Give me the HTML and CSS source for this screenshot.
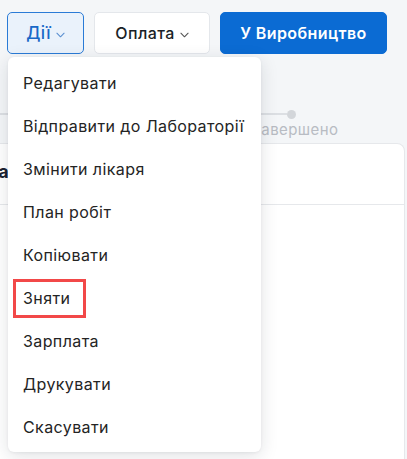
FILE: index.html
```html
<!DOCTYPE html>
<html lang="uk">
<head>
<meta charset="utf-8">
<link rel="stylesheet" href="styles.css">
</head>
<body>
<div class="page">
  <div class="toolbar">
    <button class="btn btn-actions">Дії <svg class="chev" viewBox="0 0 10 6" width="9" height="6"><path d="M1 1l4 4 4-4" fill="none" stroke="currentColor" stroke-width="1.2" stroke-linecap="round" stroke-linejoin="round"/></svg></button>
    <button class="btn btn-pay">Оплата <svg class="chev" viewBox="0 0 10 6" width="9" height="6"><path d="M1 1l4 4 4-4" fill="none" stroke="currentColor" stroke-width="1.2" stroke-linecap="round" stroke-linejoin="round"/></svg></button>
    <button class="btn btn-primary">У Виробництво</button>
  </div>

  <div class="stepper">
    <div class="seg"></div>
    <div class="step">
      <div class="step-head"><span class="dot"></span></div>
      <div class="step-label">Завершено</div>
    </div>
  </div>

  <div class="card">
    <div class="card-head">
      <div class="card-title"><span>Інформація пацієнта</span></div>
    </div>
    <div class="card-body"></div>
  </div>

  <ul class="menu">
    <li class="item">Редагувати</li>
    <li class="item">Відправити до Лабораторії</li>
    <li class="item">Змінити лікаря</li>
    <li class="item">План робіт</li>
    <li class="item">Копіювати</li>
    <li class="item marked"><span class="mark">Зняти</span></li>
    <li class="item">Зарплата</li>
    <li class="item">Друкувати</li>
    <li class="item">Скасувати</li>
  </ul>
</div>
</body>
</html>
```

FILE: styles.css
```css
* { box-sizing: border-box; }
html, body { margin: 0; padding: 0; }
body {
  background: #f4f6f8;
  font-family: Inter, "Noto Sans", "DejaVu Sans", sans-serif;
  color: #222;
  letter-spacing: 0.4px;
  width: 407px;
  height: 459px;
  overflow: hidden;
}
.page {
  position: relative;
  padding: 12px 7px 0 7px;
}
.toolbar {
  display: flex;
  gap: 10px;
}
.btn {
  height: 42px;
  border-radius: 5px;
  font-family: inherit;
  font-size: 16px;
  font-weight: 500;
  letter-spacing: 0.4px;
  display: flex;
  align-items: center;
  justify-content: center;
  gap: 5px;
  cursor: pointer;
  padding: 0;
}
.chev { margin-top: 3px; }
.btn-actions {
  width: 77px;
  background: #eaf2fb;
  border: 1px solid #2a7bd6;
  color: #1868c7;
  font-size: 17px;
}
.btn-pay {
  width: 116px;
  background: #fff;
  border: 1px solid #e4e7eb;
  color: #1b1f27;
}
.btn-pay .chev { color: #555; }
.btn-actions .chev { color: #5a8fd0; }
.btn-primary {
  width: 167px;
  background: #0b6bd3;
  border: 1px solid #0b6bd3;
  color: #fff;
  font-weight: 600;
}

.stepper {
  display: flex;
  margin: 56px -7px 0 -7px;
}
.seg {
  width: 241px;
  height: 2px;
  background: #dcdfe3;
  margin-top: 3px;
}
.step {
  width: 100px;
  display: flex;
  flex-direction: column;
  align-items: center;
}
.step-head {
  width: 100%;
  height: 8px;
  display: flex;
  align-items: center;
}
.step-head::before {
  content: "";
  flex: 1;
  height: 2px;
  background: #dcdfe3;
}
.step-head::after {
  content: "";
  flex: 1;
}
.dot {
  width: 9px;
  height: 9px;
  border-radius: 50%;
  background: #d3d6da;
}
.step-label {
  margin-top: 2px;
  margin-left: 8px;
  font-size: 15px;
  line-height: 20px;
  color: #b8bcc3;
}

.card {
  margin: 3px -5px 0 -7px;
  background: #fff;
  border: 1px solid #e6e8eb;
  border-left: none;
  border-radius: 0 8px 0 0;
  height: 330px;
}
.card-head {
  height: 61px;
  border-bottom: 1px solid #e6e8eb;
  display: flex;
  align-items: center;
  padding-bottom: 5px;
}
.card-title {
  width: 9px;
  display: flex;
  justify-content: flex-end;
  overflow: hidden;
  white-space: nowrap;
  font-size: 18px;
  font-weight: 700;
  color: #1c2230;
}

.menu {
  position: absolute;
  left: 8px;
  top: 57px;
  width: 253px;
  margin: 0;
  padding: 4px 0;
  list-style: none;
  background: #fff;
  border-radius: 6px;
  box-shadow: 0 4px 18px rgba(20, 30, 50, 0.13), 0 1px 3px rgba(20, 30, 50, 0.06);
}
.item {
  height: 43px;
  display: flex;
  align-items: center;
  padding-left: 15px;
  font-size: 16px;
  color: #242424;
  white-space: nowrap;
}
.marked { position: relative; }
.mark {
  position: relative;
}
.mark::after {
  content: "";
  position: absolute;
  left: -10px;
  right: -16px;
  top: -9px;
  bottom: -10px;
  border: 3px solid #f24848;
}
```
